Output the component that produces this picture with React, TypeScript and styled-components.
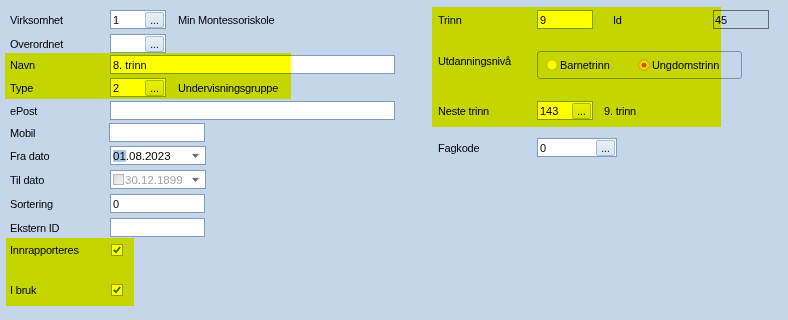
import React from "react";
import styled, { createGlobalStyle } from "styled-components";

const GlobalStyle = createGlobalStyle`
  html, body {
    margin: 0;
    padding: 0;
    background: #c5d5ea;
  }
  body {
    font-family: "Liberation Sans", Arial, sans-serif;
    font-size: 11px;
    color: #000;
    width: 788px;
    height: 320px;
    overflow: hidden;
  }
`;

const Page = styled.div`
  display: flex;
  align-items: flex-start;
`;

const Column = styled.div<{ $width?: number; $pad: number }>`
  display: flex;
  flex-direction: column;
  width: ${(p) => (p.$width ? `${p.$width}px` : "auto")};
  padding-left: ${(p) => p.$pad}px;
  box-sizing: border-box;
`;

// highlighted block: a yellow layer multiplied over the rows
const Group = styled.div<{ $inset: number; $mt?: number; $pt?: number; $pb?: number }>`
  position: relative;
  margin-left: -${(p) => p.$inset}px;
  padding-left: ${(p) => p.$inset}px;
  margin-top: ${(p) => p.$mt ?? 0}px;
  padding-top: ${(p) => p.$pt ?? 0}px;
  padding-bottom: ${(p) => p.$pb ?? 0}px;
`;

const Marker = styled.div<{ $width: number }>`
  position: absolute;
  left: 0;
  top: 0;
  bottom: 0;
  width: ${(p) => p.$width}px;
  background: #ffff00;
  mix-blend-mode: multiply;
  pointer-events: none;
`;

const Row = styled.div<{ $mt?: number; $h?: number; $top?: boolean }>`
  display: flex;
  align-items: ${(p) => (p.$top ? "flex-start" : "center")};
  height: ${(p) => p.$h ?? 19}px;
  margin-top: ${(p) => p.$mt ?? 0}px;
`;

const Label = styled.div<{ $w: number; $mt?: number }>`
  width: ${(p) => p.$w}px;
  flex: none;
  letter-spacing: -0.2px;
  white-space: nowrap;
  margin-top: ${(p) => p.$mt ?? 0}px;
`;

const Caption = styled.div<{ $ml: number; $w?: number }>`
  margin-left: ${(p) => p.$ml}px;
  width: ${(p) => (p.$w ? `${p.$w}px` : "auto")};
  letter-spacing: -0.2px;
  white-space: nowrap;
`;

const Field = styled.div<{ $w: number; $ml?: number }>`
  box-sizing: border-box;
  width: ${(p) => p.$w}px;
  height: 19px;
  margin-left: ${(p) => p.$ml ?? 0}px;
  border: 1px solid #7f9db9;
  background: #fff;
  display: flex;
  align-items: center;
  padding-left: 2px;
  flex: none;
`;

const ReadOnlyField = styled(Field)`
  border-color: #6b6b6b;
  background: transparent;
  padding-left: 1px;
`;

const FieldText = styled.span<{ $muted?: boolean; $size?: number }>`
  flex: 1;
  font-size: ${(p) => p.$size ?? 11}px;
  color: ${(p) => (p.$muted ? "#a3a3a3" : "#000")};
  white-space: nowrap;
  display: flex;
  align-items: center;
`;

const Selected = styled.span`
  background: #a9c6e9;
`;

const DotsButton = styled.div`
  box-sizing: border-box;
  width: 19px;
  height: 16px;
  margin-right: 1px;
  border: 1px solid #a9bdd6;
  border-radius: 2px;
  background: linear-gradient(#e8eff8, #d8e4f2);
  display: flex;
  align-items: flex-end;
  justify-content: center;
  font-size: 10px;
  line-height: 11px;
  padding-bottom: 1px;
  flex: none;
`;

const Arrow = styled.svg`
  width: 7px;
  height: 4px;
  margin-right: 6px;
  flex: none;
`;

const MiniCheck = styled.span`
  box-sizing: border-box;
  width: 11px;
  height: 11px;
  margin-right: 1px;
  border: 1px solid #b5b5b5;
  background: linear-gradient(135deg, #dcdcdc, #f4f4f4);
  flex: none;
`;

const CheckBox = styled.div`
  box-sizing: border-box;
  width: 12px;
  height: 12px;
  margin-left: 1px;
  border: 1px solid #9a9a8a;
  background: #fff;
  display: flex;
  align-items: center;
  justify-content: center;
`;

const RadioBox = styled.div`
  box-sizing: border-box;
  width: 205px;
  height: 28px;
  border: 1px solid #7f93ab;
  border-radius: 3px;
  display: flex;
  align-items: center;
  padding-left: 8px;
`;

const RadioItem = styled.div<{ $w?: number }>`
  display: flex;
  align-items: center;
  width: ${(p) => (p.$w ? `${p.$w}px` : "auto")};
  letter-spacing: -0.1px;
`;

const RadioDot = styled.svg`
  width: 12px;
  height: 12px;
  margin-right: 2px;
  flex: none;
`;

const Lookup = ({ w, value, ml }: { w: number; value: string; ml?: number }) => (
  <Field $w={w} $ml={ml}>
    <FieldText>{value}</FieldText>
    <DotsButton>...</DotsButton>
  </Field>
);

const DropArrow = () => (
  <Arrow viewBox="0 0 7 4">
    <path d="M0 0h7L3.5 4z" fill="#6b6b6b" />
  </Arrow>
);

const Check = () => (
  <CheckBox>
    <svg width="8" height="8" viewBox="0 0 8 8">
      <path d="M0.8 3.8L3 6.2L7.2 1" stroke="#2b6e1a" strokeWidth="1.8" fill="none" />
    </svg>
  </CheckBox>
);

const Radio = ({ on }: { on?: boolean }) => (
  <RadioDot viewBox="0 0 12 12">
    <circle cx="6" cy="6" r="5.3" fill="#fff" stroke={on ? "#b0a070" : "#b8b8a8"} strokeWidth="1" />
    <circle cx="6" cy="6" r="4.2" fill="none" stroke={on ? "#f0c060" : "#eeeeee"} strokeWidth="1.2" />
    {on && <circle cx="6" cy="6" r="2.6" fill="#d8501a" />}
  </RadioDot>
);

export default function App() {
  return (
    <>
      <GlobalStyle />
      <Page>
        <Column $width={432} $pad={10}>
          <Row $mt={10}>
            <Label $w={100}>Virksomhet</Label>
            <Lookup w={56} value="1" />
            <Caption $ml={12}>Min Montessoriskole</Caption>
          </Row>
          <Row $mt={5}>
            <Label $w={100}>Overordnet</Label>
            <Lookup w={56} value="" />
          </Row>
          <Group $inset={5} $pt={2} $pb={2}>
            <Row>
              <Label $w={100}>Navn</Label>
              <Field $w={285}>
                <FieldText>8. trinn</FieldText>
              </Field>
            </Row>
            <Row $mt={4}>
              <Label $w={100}>Type</Label>
              <Lookup w={56} value="2" />
              <Caption $ml={12}>Undervisningsgruppe</Caption>
            </Row>
            <Marker $width={286} />
          </Group>
          <Row $mt={2}>
            <Label $w={100}>ePost</Label>
            <Field $w={285} />
          </Row>
          <Row $mt={3}>
            <Label $w={99}>Mobil</Label>
            <Field $w={96} />
          </Row>
          <Row $mt={4}>
            <Label $w={100}>Fra dato</Label>
            <Field $w={96}>
              <FieldText $size={11.5}>
                <Selected>01</Selected>.08.2023
              </FieldText>
              <DropArrow />
            </Field>
          </Row>
          <Row $mt={5}>
            <Label $w={100}>Til dato</Label>
            <Field $w={96}>
              <FieldText $muted $size={11.5}>
                <MiniCheck />
                30.12.1899
              </FieldText>
              <DropArrow />
            </Field>
          </Row>
          <Row $mt={5}>
            <Label $w={100}>Sortering</Label>
            <Field $w={95}>
              <FieldText>0</FieldText>
            </Field>
          </Row>
          <Row $mt={5}>
            <Label $w={100}>Ekstern ID</Label>
            <Field $w={95} />
          </Row>
          <Group $inset={4} $mt={1} $pt={2} $pb={7}>
            <Row>
              <Label $w={100}>Innrapporteres</Label>
              <Check />
            </Row>
            <Row $mt={21}>
              <Label $w={100}>I bruk</Label>
              <Check />
            </Row>
            <Marker $width={128} />
          </Group>
        </Column>

        <Column $pad={6}>
          <Group $inset={6} $mt={7} $pt={3} $pb={7}>
            <Row>
              <Label $w={99}>Trinn</Label>
              <Field $w={56}>
                <FieldText>9</FieldText>
              </Field>
              <Caption $ml={20} $w={100}>
                Id
              </Caption>
              <ReadOnlyField $w={56}>
                <FieldText>45</FieldText>
              </ReadOnlyField>
            </Row>
            <Row $mt={22} $h={28} $top>
              <Label $w={99} $mt={4}>
                Utdanningsnivå
              </Label>
              <RadioBox>
                <RadioItem $w={92}>
                  <Radio />
                  Barnetrinn
                </RadioItem>
                <RadioItem>
                  <Radio on />
                  Ungdomstrinn
                </RadioItem>
              </RadioBox>
            </Row>
            <Row $mt={22}>
              <Label $w={99}>Neste trinn</Label>
              <Lookup w={56} value="143" />
              <Caption $ml={11}>9. trinn</Caption>
            </Row>
            <Marker $width={289} />
          </Group>
          <Row $mt={11}>
            <Label $w={99}>Fagkode</Label>
            <Lookup w={80} value="0" />
          </Row>
        </Column>
      </Page>
    </>
  );
}
